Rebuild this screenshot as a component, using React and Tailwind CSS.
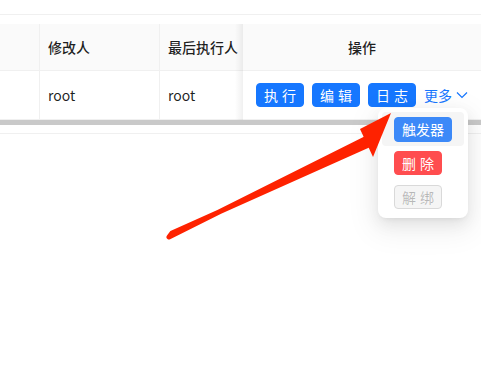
import React from "react";

const font = { fontFamily: '"Noto Sans CJK SC", "Noto Sans", sans-serif' };

const ActionButton = ({ children, className = "" }) => (
  <span
    className={`inline-flex items-center justify-center h-[24px] rounded-[4px] border text-[14px] leading-none ${className}`}
  >
    {children}
  </span>
);

// two-char antd buttons get a space between the characters
const TwoChar = ({ children, className = "" }) => (
  <ActionButton className={`w-[48px] pl-[4px] tracking-[4px] ${className}`}>
    {children}
  </ActionButton>
);

const MenuItem = ({ children, active }) => (
  <div
    className={`flex items-center h-[34px] pl-[12px] rounded-[4px] ${
      active ? "bg-[#f5f5f5]" : ""
    }`}
  >
    {children}
  </div>
);

export default function App() {
  return (
    <div
      className="relative w-[481px] h-[368px] overflow-hidden bg-white text-[14px] text-[rgba(0,0,0,0.88)]"
      style={font}
    >
      <div className="h-[15px] border-b border-[#f0f0f0]" />
      <div className="h-[9px]" />

      {/* table */}
      <div className="flex">
        <div className="flex flex-col w-[243px]">
          <div className="flex h-[47px] bg-[#fafafa] border-b border-[#f0f0f0] font-medium">
            <div className="w-[40px] border-r border-[#f0f0f0]" />
            <div className="w-[120px] border-r border-[#f0f0f0] flex items-center pl-[8px]">
              修改人
            </div>
            <div className="flex-1 flex items-center pl-[8px] whitespace-nowrap overflow-hidden">
              最后执行人
            </div>
          </div>
          <div className="flex h-[49px] border-b border-[#f0f0f0]">
            <div className="w-[40px] border-r border-[#f0f0f0]" />
            <div className="w-[120px] border-r border-[#f0f0f0] flex items-center pl-[8px]">
              root
            </div>
            <div className="flex-1 flex items-center pl-[8px]">root</div>
          </div>
        </div>

        <div className="relative flex-1 flex flex-col bg-white">
          <div className="absolute left-[-8px] top-0 bottom-0 w-[8px] bg-gradient-to-l from-[rgba(0,0,0,0.06)] to-transparent" />
          <div className="flex h-[47px] items-center justify-center bg-[#fafafa] border-b border-[#f0f0f0] font-medium">
            操作
          </div>
          <div className="flex h-[49px] items-center pl-[13px] gap-[8px] border-b border-[#f0f0f0]">
            <TwoChar className="bg-[#1677ff] border-[#1677ff] text-white">执行</TwoChar>
            <TwoChar className="bg-[#1677ff] border-[#1677ff] text-white">编辑</TwoChar>
            <TwoChar className="bg-[#1677ff] border-[#1677ff] text-white">日志</TwoChar>
            <span className="flex items-center gap-[4px] text-[#1677ff]">
              更多
              <svg width="12" height="12" viewBox="0 0 12 12" fill="none">
                <path d="M1 3.5l5 5 5-5" stroke="#1677ff" strokeWidth="1.2" />
              </svg>
            </span>
          </div>
        </div>
      </div>

      {/* horizontal scrollbar */}
      <div className="h-[5px] bg-[#c9c9c9]" />
      <div className="h-[9px] border-b border-[#f0f0f0]" />

      {/* dropdown */}
      <div className="absolute left-[378px] top-[108px] w-[90px] p-[4px] bg-white rounded-[8px] shadow-[0_6px_16px_0_rgba(0,0,0,0.08),0_3px_6px_-4px_rgba(0,0,0,0.12),0_9px_28px_8px_rgba(0,0,0,0.05)]">
        <MenuItem active>
          <ActionButton className="w-[58px] h-[25px] bg-[#3c89f8] border-[#3c89f8] text-white">
            触发器
          </ActionButton>
        </MenuItem>
        <MenuItem>
          <TwoChar className="bg-[#ff4d4f] border-[#ff4d4f] text-white">删除</TwoChar>
        </MenuItem>
        <MenuItem>
          <TwoChar className="bg-[#f5f5f5] border-[#d9d9d9] text-[rgba(0,0,0,0.25)]">
            解绑
          </TwoChar>
        </MenuItem>
      </div>

      {/* annotation arrow */}
      <svg
        className="absolute left-0 top-0 pointer-events-none"
        width="481"
        height="368"
        viewBox="0 0 481 368"
      >
        <path
          d="M169 237 L367 138 L371 144 L172 233 Z"
          fill="#fe2200"
          stroke="#fe2200"
          strokeWidth="5"
          strokeLinejoin="round"
          strokeLinecap="round"
        />
        <path d="M360 129 L391 113 L373 157 Z" fill="#fe2200" />
      </svg>
    </div>
  );
}
